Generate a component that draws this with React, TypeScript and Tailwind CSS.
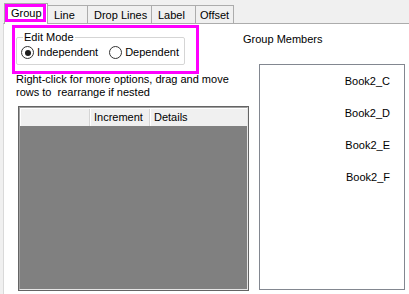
import React from "react";

const font = { fontFamily: '"Liberation Sans", Arial, sans-serif' };

function Radio({ checked, label, className = "" }: { checked?: boolean; label: string; className?: string }) {
  return (
    <div className={`flex items-center ${className}`}>
      <span className="w-[13px] h-[13px] rounded-full border border-[#333333] bg-white flex items-center justify-center">
        {checked && <span className="w-[6px] h-[6px] rounded-full bg-[#1a1a1a]" />}
      </span>
      <span className="ml-[3px] leading-[13px]">{label}</span>
    </div>
  );
}

const tabs = [
  { name: "Line", cls: "w-[41px] pl-[6px]" },
  { name: "Drop Lines", cls: "w-[65px] pl-[6px]" },
  { name: "Label", cls: "w-[45px] pl-[6px]" },
  { name: "Offset", cls: "w-[39px] pl-[4px]" },
];

const members = ["Book2_C", "Book2_D", "Book2_E", "Book2_F"];

export default function App() {
  return (
    <div
      className="relative w-[409px] h-[294px] overflow-hidden bg-[#f0f0f0] text-[11px] text-black pt-[3px]"
      style={font}
    >
      {/* TABS */}
      <div className="flex items-end h-[20px] pl-[4px]">
        <div className="relative z-10 -mb-px h-[21px] w-[44px] bg-white border border-b-0 border-[#acacac] pl-[6px] pt-[3px] leading-[13px]">
          Group
        </div>
        {tabs.map((t) => (
          <div
            key={t.name}
            className={`h-[18px] -ml-px border border-b-0 border-[#acacac] bg-[#f0f0f0] pt-[3px] leading-[13px] ${t.cls}`}
          >
            {t.name}
          </div>
        ))}
      </div>

      {/* PANEL */}
      <div className="ml-[3px] h-[271px] bg-white border-t border-l border-t-[#acacac] border-l-[#d9d9d9] flex">
        {/* LEFT */}
        <div className="w-[245px] shrink-0 pl-[12px] flex flex-col">
          <fieldset className="mt-[7px] w-[169px] border border-[#d5d5d5] rounded-[2px] pl-[4px] pb-[5px] m-0">
            <legend className="ml-[2px] px-[1px] leading-[13px]">Edit Mode</legend>
            <div className="flex items-center mt-[2px]">
              <Radio checked label="Independent" />
              <Radio label="Dependent" className="ml-[11px]" />
            </div>
          </fieldset>

          <p className="mt-[8px] leading-[13px] whitespace-nowrap">
            Right-click for more options, drag and move
            <br />
            rows to&nbsp; rearrange if nested
          </p>

          <div className="mt-[7px] ml-[2px] w-[231px] h-[185px] border border-[#646464] flex">
            <div className="flex-1 flex flex-col border border-l-[#a0a0a0] border-t-[#a0a0a0] border-r-[#e6e6e6] border-b-[#e6e6e6] bg-[#808080]">
              <div className="flex h-[18px] bg-[#f0f0f0] border-t border-l border-white">
                <div className="w-[69px] border-r border-[#d5d5d5]" />
                <div className="w-[60px] border-r border-[#d5d5d5] border-l border-l-white pl-[3px] leading-[16px]">
                  Increment
                </div>
                <div className="flex-1 border-l border-white pl-[3px] leading-[16px]">Details</div>
              </div>
            </div>
          </div>
        </div>

        {/* RIGHT */}
        <div className="ml-[10px] w-[146px] shrink-0 flex flex-col">
          <div className="-ml-[16px] mt-[9px] leading-[13px]">Group Members</div>
          <div className="mt-[18px] h-[226px] border border-[#828790] bg-white pt-[10px] pr-[14px] flex flex-col gap-[19px] items-end">
            {members.map((m) => (
              <div key={m} className="leading-[13px]">
                {m}
              </div>
            ))}
          </div>
        </div>
      </div>

      {/* HIGHLIGHTS */}
      <div className="absolute left-[5px] top-[4px] w-[41px] h-[18px] border-[3px] border-[#ff00ff] z-20" />
      <div className="absolute left-[12px] top-[25px] w-[187px] h-[49px] border-[3px] border-[#ff00ff] z-20" />
    </div>
  );
}
